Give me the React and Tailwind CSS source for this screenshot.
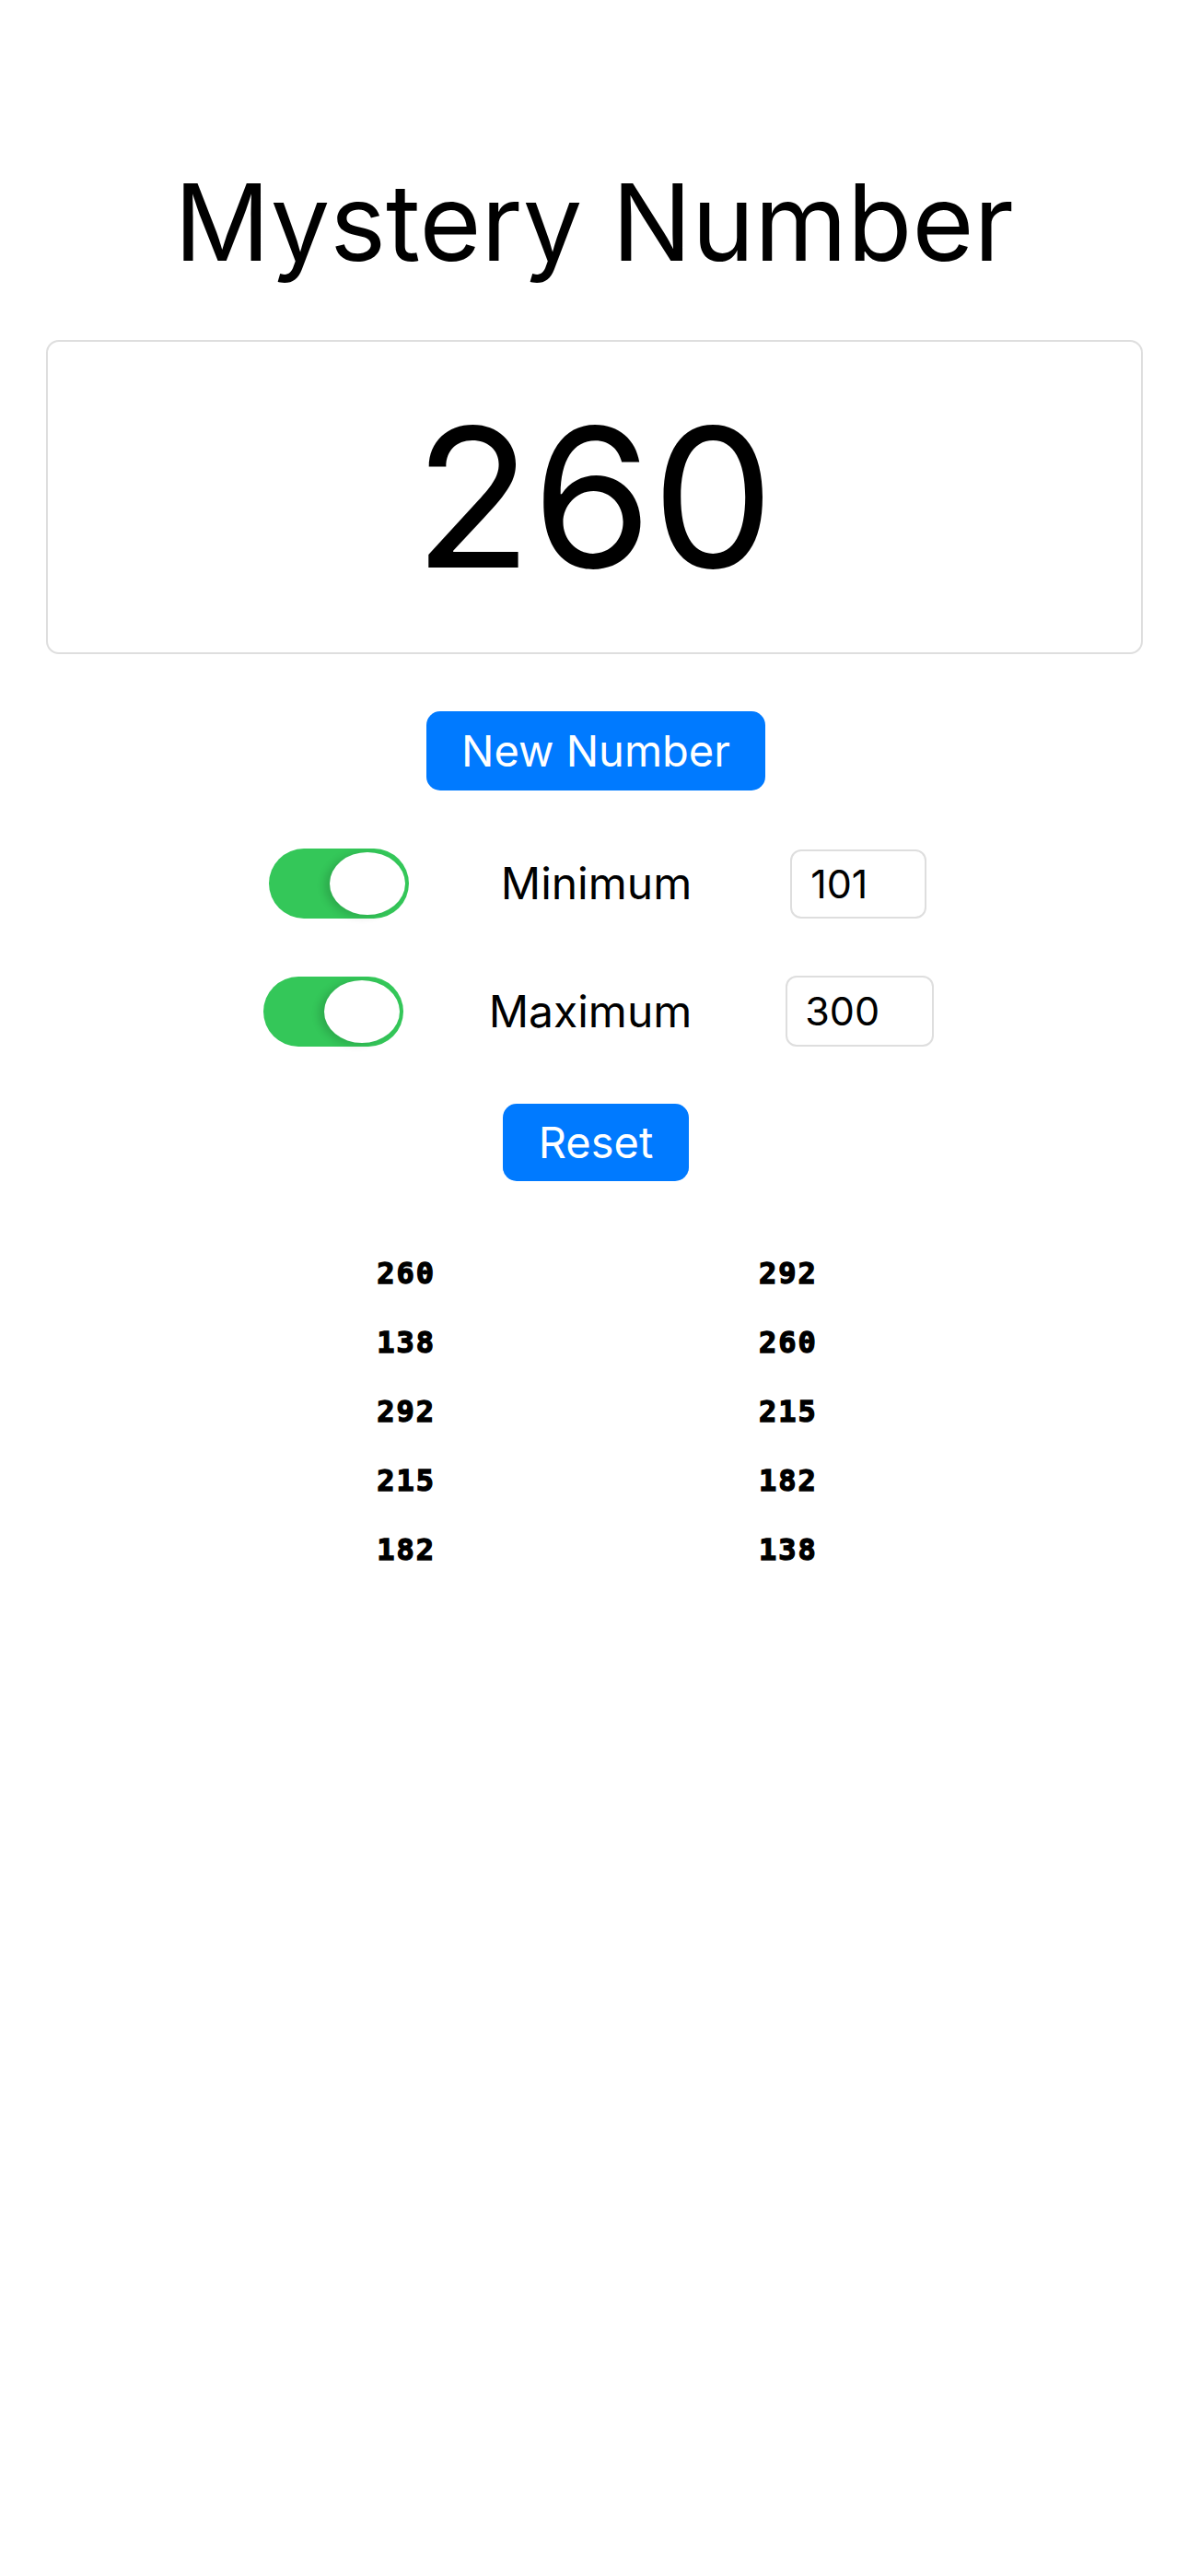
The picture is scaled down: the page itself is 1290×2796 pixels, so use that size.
export default function App() {
  const history = [
    [260, 292],
    [138, 260],
    [292, 215],
    [215, 182],
    [182, 138],
  ];

  const Toggle = () => (
    <div className="w-[152px] h-[76px] rounded-full bg-[#34c759] flex items-center justify-end pr-[4px]">
      <div className="w-[82px] h-[68px] rounded-[50%] bg-white shadow-[-6px_2px_8px_rgba(0,0,0,0.14)]" />
    </div>
  );

  return (
    <div className="min-h-screen bg-white flex flex-col items-center font-[Inter,sans-serif] text-black">
      <h1 className="mt-[184px] text-[115px] leading-none font-normal">Mystery Number</h1>

      <div className="mt-[70px] w-[1191px] h-[341px] border-2 border-[#dedede] rounded-[14px] flex items-center justify-center">
        <span className="text-[210px] leading-none">260</span>
      </div>

      <button className="mt-[62px] ml-[4px] h-[86px] px-[38px] bg-[#007aff] text-white text-[47px] rounded-[15px]">
        New Number
      </button>

      <div className="mt-[63px] ml-[8px] flex items-center">
        <Toggle />
        <span className="ml-[100px] text-[48px]">Minimum</span>
        <div className="ml-[107px] w-[148px] h-[75px] border-2 border-[#dedede] rounded-[12px] flex items-center pl-[20px] text-[43px]">
          101
        </div>
      </div>

      <div className="mt-[62px] ml-[10px] flex items-center">
        <Toggle />
        <span className="ml-[93px] text-[48px]">Maximum</span>
        <div className="ml-[102px] w-[161px] h-[77px] border-2 border-[#dedede] rounded-[12px] flex items-center pl-[19px] text-[43px]">
          300
        </div>
      </div>

      <button className="mt-[62px] ml-[4px] h-[84px] px-[39px] bg-[#007aff] text-white text-[47px] rounded-[15px]">
        Reset
      </button>

      <div className="mt-[63px] flex gap-[351px] ml-[7px] font-['DejaVu_Sans_Mono',monospace] font-bold text-[32px] tracking-[2px] [-webkit-text-stroke:1.4px_black]">
        {[0, 1].map((col) => (
          <div key={col} className="flex flex-col">
            {history.map((row, i) => (
              <span key={i} className="leading-[75px]">
                {row[col]}
              </span>
            ))}
          </div>
        ))}
      </div>
    </div>
  );
}
